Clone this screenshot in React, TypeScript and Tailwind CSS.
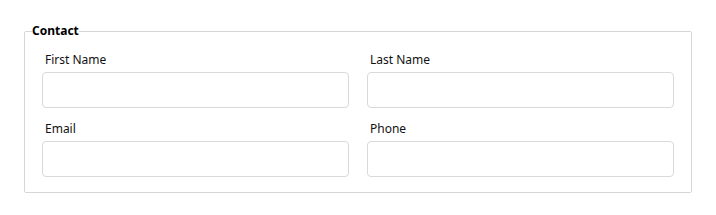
export default function App() {
  const fields = [
    { id: 'firstName', label: 'First Name' },
    { id: 'lastName', label: 'Last Name' },
    { id: 'email', label: 'Email' },
    { id: 'phone', label: 'Phone' },
  ];

  return (
    <div className="min-h-screen bg-white pt-[23px] px-6" style={{ fontFamily: '"Noto Sans", "Open Sans", sans-serif' }}>
      <fieldset className="border border-[#d6d6d6] rounded-[2px] px-[7px] pb-[15px]">
        <legend className="text-[12px] leading-[16px] font-bold text-black px-0">Contact</legend>
        <div className="grid grid-cols-2 gap-x-[18px] gap-y-[13px] px-[10px] pt-[13px]">
          {fields.map((f) => (
            <div key={f.id} className="flex flex-col">
              <label htmlFor={f.id} className="text-[12px] leading-[16px] text-[#111] pl-[3px] mb-[4px]">
                {f.label}
              </label>
              <input
                id={f.id}
                type="text"
                className="h-[36px] w-full border border-[#d9d9d9] rounded-[4px] bg-white px-2 text-[12px] outline-none"
              />
            </div>
          ))}
        </div>
      </fieldset>
    </div>
  );
}
